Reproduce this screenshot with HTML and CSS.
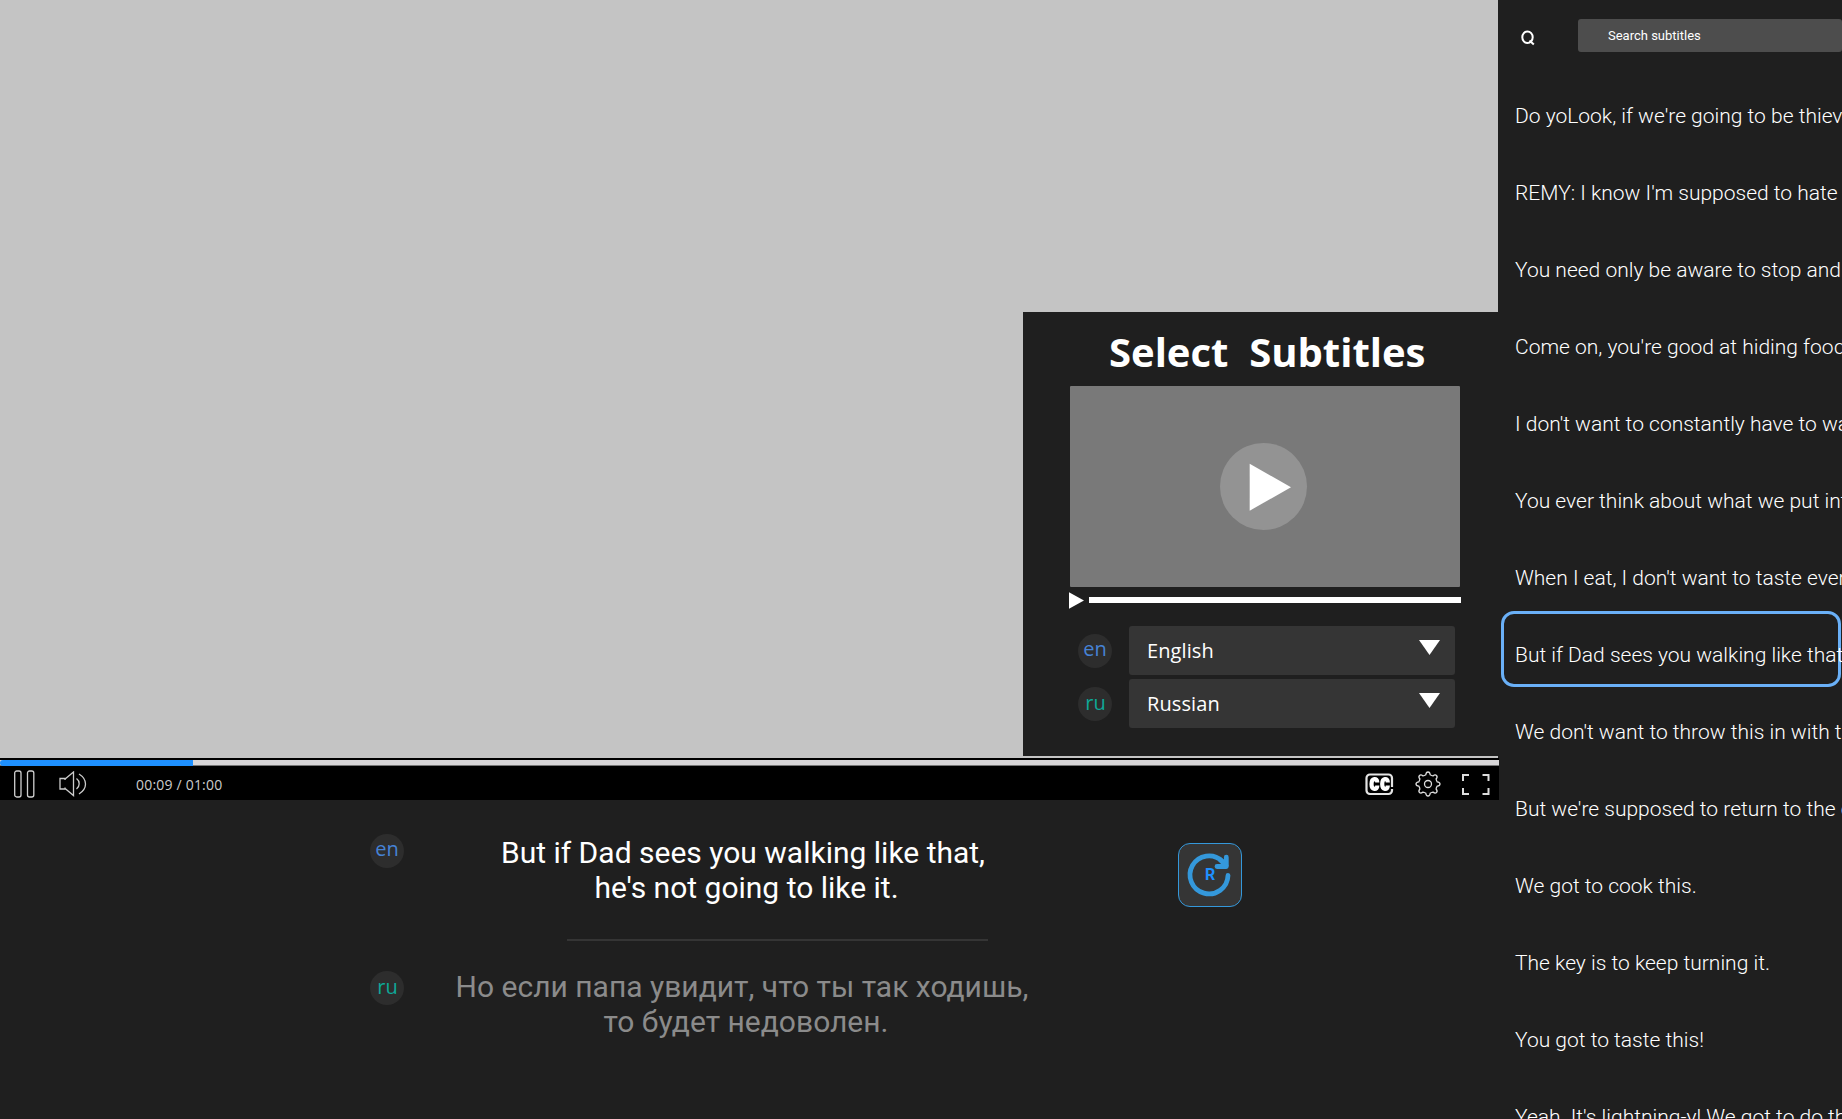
FILE: index.html
```html
<!DOCTYPE html>
<html lang="en">
<head>
<meta charset="utf-8">
<title>Subtitle player</title>
<link rel="stylesheet" href="styles.css">
</head>
<body>
<div class="app">
  <main class="player">
    <section class="video">
      <div class="picker">
        <h1 class="picker-title">Select&nbsp; Subtitles</h1>
        <div class="preview"><div class="preview-play"><svg width="87" height="87"><path d="M29.7 20.7 71 44.2 29.7 67.7z" fill="#fff"/></svg></div></div>
        <div class="preview-bar"><svg width="15" height="17"><path d="M0 .3 15 8.5 0 16.7z" fill="#fff"/></svg><span class="preview-track"></span></div>
        <div class="langs">
          <div class="lang"><span class="badge en">en</span><div class="select">English<svg width="21" height="15"><path d="M0 0h21L10.5 15z" fill="#fff"/></svg></div></div>
          <div class="lang"><span class="badge ru">ru</span><div class="select">Russian<svg width="21" height="15"><path d="M0 0h21L10.5 15z" fill="#fff"/></svg></div></div>
        </div>
      </div>
    </section>
    <section class="controls">
      <div class="progress"><div class="progress-done"></div></div>
      <div class="buttons">
        <svg class="pause" width="22" height="29" fill="none" stroke="#d0d0d0" stroke-width="1.3"><rect x=".7" y="1" width="6.3" height="26" rx="2"/><rect x="13.5" y="1" width="6.3" height="26" rx="2"/></svg>
        <svg class="volume" width="30" height="26" fill="none" stroke="#ccc" stroke-width="1.3"><path d="M6 9V7.500H1v10.500h5v-1.500M5.500 8.500L14.500 1v23.500L5.500 17M17.500 7.500a6.500 6.500 0 0 1 0 10.500M20 3c4 2.500 6.500 6 6.500 10s-2.500 7.500-6.500 10"/></svg>
        <span class="time">00:09 / 01:00</span>
        <svg class="cc" width="29" height="23"><path d="M27 14V5a3.500 3.500 0 0 0-3.500-3.500H5A3.500 3.500 0 0 0 1.500 5v12.500A3.500 3.500 0 0 0 5 21h18.500A3.500 3.500 0 0 0 27 17.500V16" fill="none" stroke="#e4e4e4" stroke-width="2.200"/><g fill="none" stroke="#fff" stroke-width="4.200"><path d="M12.300 9.500C12.300 4.500 6.500 4.800 6.500 11s5.800 6.500 5.800 1.500M22.800 9.500C22.800 4.500 17.200 4.800 17.200 11s5.600 6.500 5.600 1.500"/></g></svg>
        <svg class="gear" width="26" height="26" viewBox="-13 -13 26 26" fill="none" stroke="#ddd" stroke-width="1.300"><circle r="3.500"/><path d="M-2.200-9.200C-2-11-1.500-12 0-12S2-11 2.200-9.200Q3.500-8.300 5-8.100C6.400-9.300 7.500-9.500 8.500-8.500S9.300-6.400 8.100-5Q8.300-3.500 9.200-2.200C11-2 12-1.500 12 0S11 2 9.200 2.200Q8.300 3.500 8.100 5C9.300 6.400 9.500 7.500 8.500 8.500S6.400 9.300 5 8.100Q3.500 8.300 2.200 9.200C2 11 1.500 12 0 12S-2 11-2.200 9.200Q-3.500 8.300-5 8.100C-6.400 9.300-7.500 9.500-8.500 8.500S-9.300 6.400-8.100 5Q-8.300 3.500-9.200 2.200C-11 2-12 1.500-12 0S-11-2-9.200-2.200Q-8.300-3.500-8.100-5C-9.300-6.400-9.500-7.500-8.500-8.500S-6.400-9.300-5-8.100Q-3.500-8.300-2.200-9.200z"/></svg>
        <svg class="full" width="28" height="21" fill="none" stroke="#ddd" stroke-width="2"><path d="M1 7V1h6M20.500 1h6v6M26.500 14v6h-6M7 20H1v-6"/></svg>
      </div>
    </section>
    <section class="captions">
      <div class="badges"><span class="badge en">en</span><span class="badge ru">ru</span></div>
      <div class="lines">
        <p class="line first">But if Dad sees you walking like that,<br><span>he's not going to like it.</span></p>
        <hr class="rule">
        <p class="line second">Но если папа увидит, что ты так ходишь,<br><span>то будет недоволен.</span></p>
      </div>
      <div class="repeat">
        <svg width="64" height="64" fill="none" stroke="#3498db" stroke-width="4.800" stroke-linecap="round" stroke-linejoin="round"><path d="M50 32.500A19 19 0 1 1 44 18"/><path d="M48.300 14.200V23.500H39"/><path d="M42 16.500l6 6"/></svg>
        <span class="repeat-letter">R</span>
      </div>
    </section>
  </main>
  <aside class="sidebar">
    <div class="search">
      <svg width="15" height="16" fill="none" stroke="#fff" stroke-width="2"><ellipse cx="6.500" cy="7.200" rx="5.200" ry="5.800"/><path d="M8.500 10.500l4.300 4"/></svg>
      <div class="search-box">Search subtitles</div>
    </div>
    <ul class="list">
      <li>Do yoLook, if we're going to be thieves</li>
      <li>REMY: I know I'm supposed to hate</li>
      <li>You need only be aware to stop and</li>
      <li>Come on, you're good at hiding food.</li>
      <li>I don't want to constantly have to wash</li>
      <li>You ever think about what we put into</li>
      <li>When I eat, I don't want to taste everything</li>
      <li class="current">But if Dad sees you walking like that,</li>
      <li>We don't want to throw this in with the</li>
      <li>But we're supposed to return to the colony</li>
      <li>We got to cook this.</li>
      <li>The key is to keep turning it.</li>
      <li>You got to taste this!</li>
      <li>Yeah. It's lightning-y! We got to do that</li>
    </ul>
  </aside>
</div>
</body>
</html>
```
FILE: styles.css
```css
* { box-sizing: border-box; }
body { margin: 0; background: #1f1f1f; color: #fff; font-family: Roboto, sans-serif; }
svg { display: block; flex: none; }
.app { display: flex; height: 1119px; overflow: hidden; }
.player { width: 1499px; flex: none; display: flex; flex-direction: column; }

.video { width: 1498px; height: 758px; background: #c4c4c4; display: flex; justify-content: flex-end; align-items: flex-end; padding-bottom: 2px; }
.picker { width: 475px; height: 444px; background: #1f1f1f; padding-left: 46px; }
.picker-title { margin: 0; height: 74px; padding: 13px 0 0 40px; font: 700 40px/54px "Open Sans", sans-serif; white-space: nowrap; }
.preview { width: 390px; height: 201px; margin-left: 1px; background: #797979; border-radius: 1px; padding: 57px 0 0 150px; }
.preview-play { width: 87px; height: 87px; border-radius: 50%; background: #939393; }
.preview-bar { display: flex; align-items: center; gap: 4.500px; height: 17px; margin-top: 5px; }
.preview-track { width: 372.500px; height: 5.500px; margin-top: -1px; background: #fff; }
.langs { display: flex; flex-direction: column; gap: 4px; margin-top: 17px; padding-left: 9px; }
.lang { display: flex; align-items: center; gap: 17px; }
.badge { flex: none; width: 34px; height: 34px; border-radius: 50%; background: #2d2d2d; font: 20px/31px "Open Sans", sans-serif; text-align: center; }
.badge.en { color: #4682d4; line-height: 30px; }
.badge.ru { color: #0ea898; padding-left: 1px; }
.select { width: 326px; height: 49px; border-radius: 3px; background: #353535; display: flex; justify-content: space-between; align-items: center; padding: 0 15px 0 18px; font: 20px/27px "Open Sans", sans-serif; letter-spacing: .1px; }
.select svg { margin-top: -7px; }

.controls { height: 42px; background: #000; padding-top: 2px; }
.progress { height: 6px; background: #d8d6d8; border-bottom: 1px solid #777; }
.progress-done { width: 193px; height: 6px; background: #1e90ff; border-radius: 3px 0 0 3px; }
.buttons { display: flex; align-items: center; height: 36px; padding: 0 9px 0 14px; }
.volume { margin-left: 23px; }
.time { margin: 2px 0 0 47px; color: #ccc; font: 14px/20px "Open Sans", sans-serif; letter-spacing: .2px; }
.cc { margin-left: auto; }
.gear { margin-left: 21px; }
.full { margin-left: 21px; }

.captions { flex: 1; display: flex; align-items: flex-start; padding-left: 370px; }
.badges { width: 34px; display: flex; flex-direction: column; gap: 103px; padding-top: 34px; }
.lines { width: 676px; padding-top: 35px; display: flex; flex-direction: column; align-items: center; }
.line { margin: 0; font-size: 30px; line-height: 35px; text-align: center; white-space: nowrap; }
.first { padding-left: 2px; }
.first span { padding-left: 7px; }
.second { color: #8b8b8b; }
.second span { padding-left: 8px; }
.rule { width: 421px; height: 2px; border: 0; margin: 34px 0 28px 87px; background: #353535; translate: -8px 0; }
.repeat { display: grid; margin: 43px 0 0 98px; width: 64px; height: 64px; border: 1px solid #3498db; border-radius: 12px; background: #353535; }
.repeat > * { grid-area: 1 / 1; margin: -1px; }
.repeat-letter { place-self: center; color: #1e90ff; font: 700 16px/20px Roboto, sans-serif; }

.sidebar { flex: 1; min-width: 0; overflow: hidden; }
.search { display: flex; padding: 19px 0 0 22px; height: 77px; }
.search svg { margin-top: 11px; }
.search-box { flex: 1; height: 33px; margin-left: 42px; border-radius: 3px; background: #4d4d4d; padding-left: 30px; font-size: 13px; line-height: 33px; }
.list { list-style: none; margin: 0; padding: 0; }
.list li { height: 77px; padding-left: 16px; font-weight: 300; font-size: 21px; line-height: 78px; white-space: nowrap; }
.list .current { width: 340px; height: 76px; margin: -5px 0 6px 2px; padding-left: 11px; line-height: 82px; border: 3px solid #6ab0f7; border-radius: 13px; }
```
